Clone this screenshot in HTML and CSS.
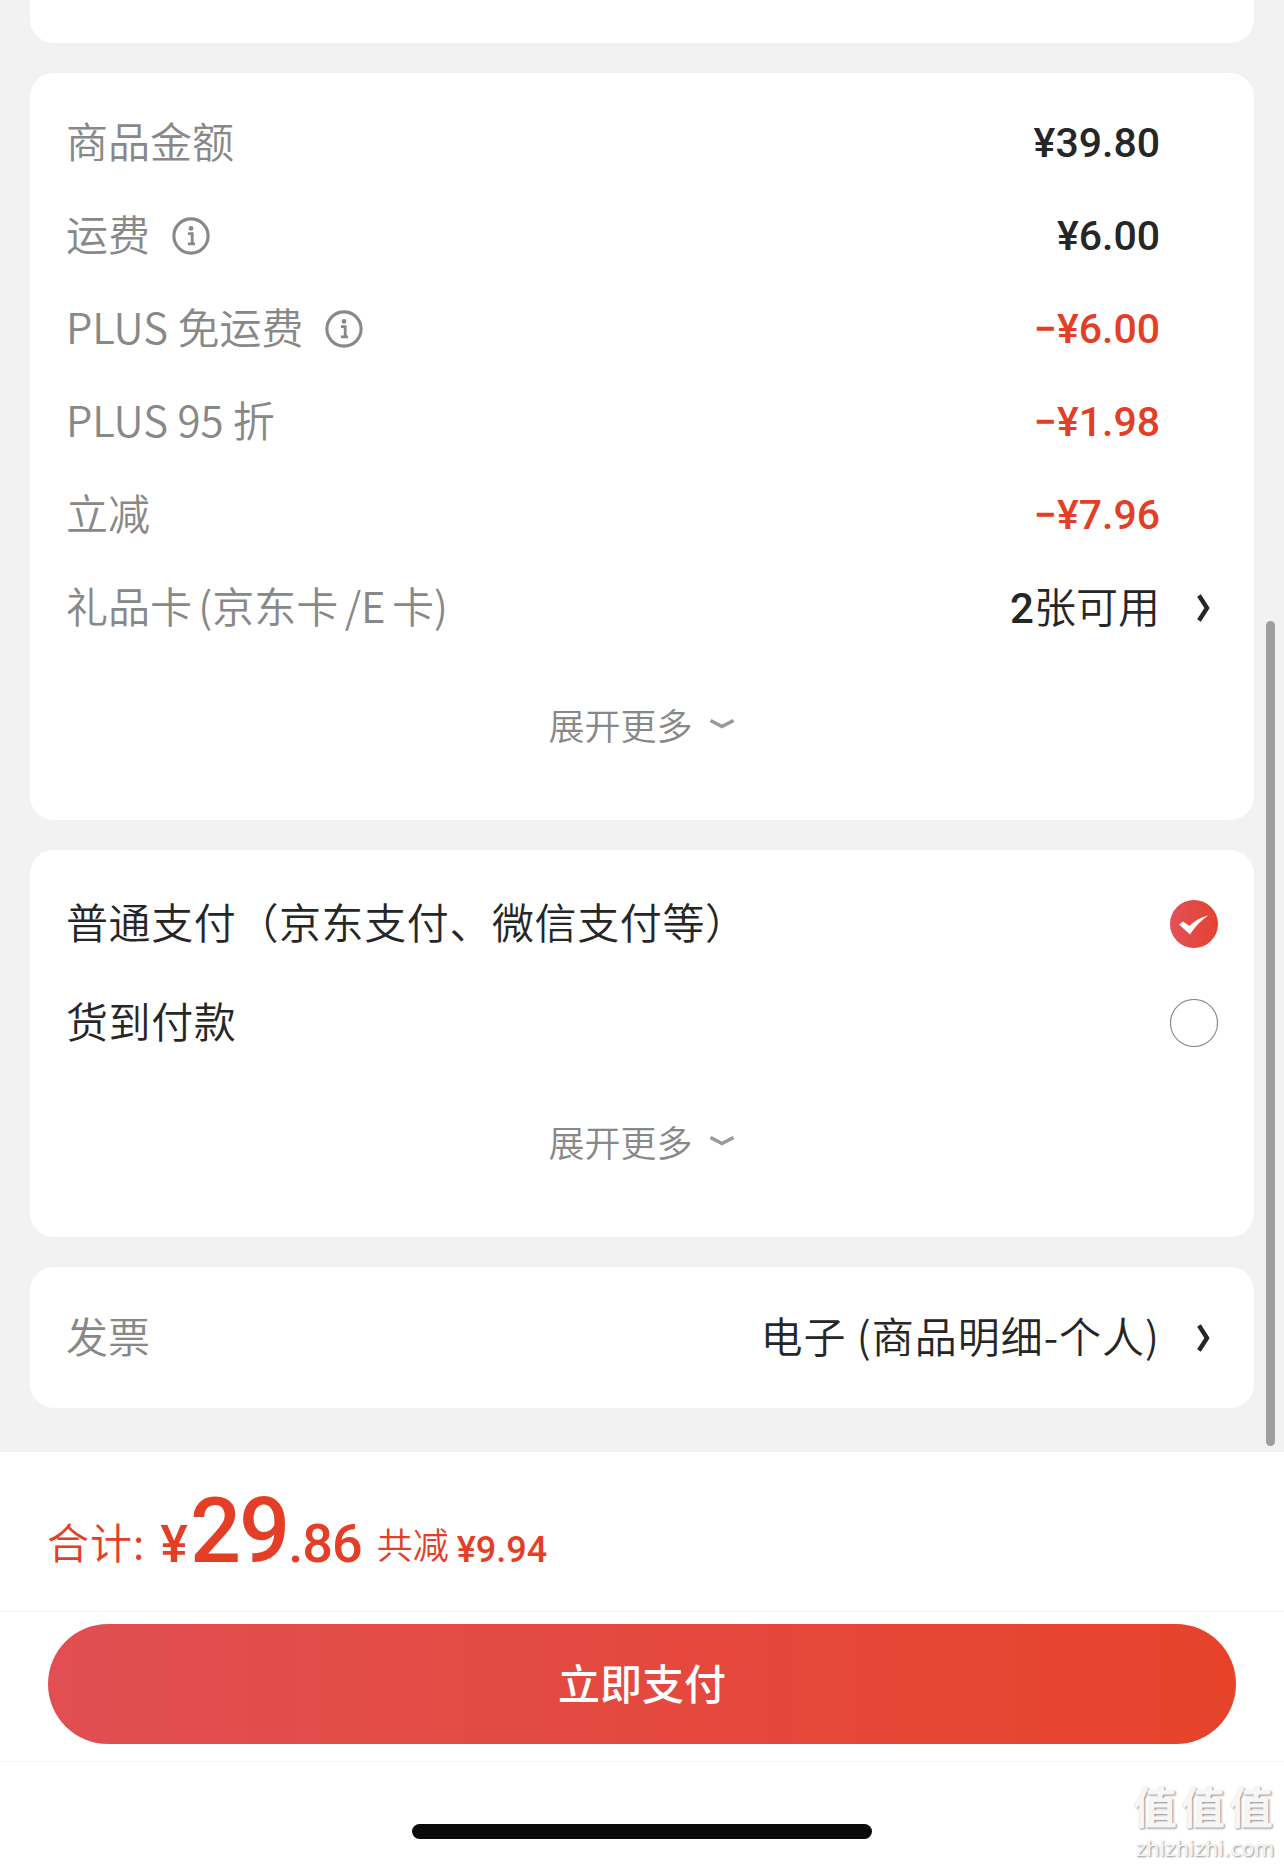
FILE: index.html
```html
<!DOCTYPE html>
<html lang="zh">
<head>
    <meta charset="utf-8">
    <title>订单结算</title>
    <link rel="stylesheet" href="styles.css">
</head>
<body>
    <div class="page">
        <div class="content">
            <div class="card card-top"></div>

            <div class="card card-price">
                <div class="row">
                    <span class="label">商品金额</span>
                    <span class="value">¥39.80</span>
                </div>
                <div class="row">
                    <span class="label">运费
                        <svg class="info" viewBox="0 0 32 32"><circle cx="16" cy="16" r="14.4" fill="none" stroke="#888" stroke-width="2.6"/><circle cx="16" cy="9.6" r="2" fill="#888"/><path d="M13.4 14h3.6v8.4M13.4 22.6h6" fill="none" stroke="#888" stroke-width="2.4"/></svg>
                    </span>
                    <span class="value">¥6.00</span>
                </div>
                <div class="row">
                    <span class="label">PLUS 免运费
                        <svg class="info" viewBox="0 0 32 32"><circle cx="16" cy="16" r="14.4" fill="none" stroke="#888" stroke-width="2.6"/><circle cx="16" cy="9.6" r="2" fill="#888"/><path d="M13.4 14h3.6v8.4M13.4 22.6h6" fill="none" stroke="#888" stroke-width="2.4"/></svg>
                    </span>
                    <span class="value red">−¥6.00</span>
                </div>
                <div class="row">
                    <span class="label">PLUS 95 折</span>
                    <span class="value red">−¥1.98</span>
                </div>
                <div class="row">
                    <span class="label">立减</span>
                    <span class="value red">−¥7.96</span>
                </div>
                <div class="row">
                    <span class="label label-tight">礼品卡 (京东卡 /E 卡)</span>
                    <span class="link"><span><span class="num">2</span>张可用</span>
                        <svg class="arrow" viewBox="0 0 14 30"><path d="M3 2.500L11 15L3 27.500" fill="none" stroke="#262626" stroke-width="4.400"/></svg>
                    </span>
                </div>
                <div class="more more-price">展开更多
                    <svg class="chevron" viewBox="0 0 26 12"><path d="M1.5 2.500L13 8.500L24.500 2.500" fill="none" stroke="#999" stroke-width="3.600"/></svg>
                </div>
            </div>

            <div class="card card-pay">
                <div class="pay-row">
                    <span class="pay-text">普通支付（京东支付、微信支付等）</span>
                    <svg class="radio" viewBox="0 0 48 48"><defs><linearGradient id="checkFill"><stop offset="0" stop-color="#e4505a"/><stop offset="1" stop-color="#e3432e"/></linearGradient></defs><circle cx="24" cy="24" r="24" fill="url(#checkFill)"/><path d="M9 24.500L13 21.500L19.500 26C24 21.500 30 17.500 38.500 15.500C30 21 25 27 20 34.500Z" fill="#fff"/></svg>
                </div>
                <div class="pay-row">
                    <span class="pay-text">货到付款</span>
                    <svg class="radio" viewBox="0 0 48 48"><circle cx="24" cy="24" r="23.500" fill="#fff" stroke="#8c8c8c" stroke-width="1.200"/></svg>
                </div>
                <div class="more more-pay">展开更多
                    <svg class="chevron" viewBox="0 0 26 12"><path d="M1.5 2.500L13 8.500L24.500 2.500" fill="none" stroke="#999" stroke-width="3.600"/></svg>
                </div>
            </div>

            <div class="card card-invoice">
                <span class="label">发票</span>
                <span class="link link-wide"><span>电子 (商品明细-个人)</span>
                    <svg class="arrow" viewBox="0 0 14 30"><path d="M3 2.500L11 15L3 27.500" fill="none" stroke="#262626" stroke-width="4.400"/></svg>
                </span>
            </div>
        </div>

        <div class="footer">
            <div class="total"><span class="total-label">合计:</span><span class="yen">¥</span><span class="big">29</span><span class="cents">.86</span><span class="saved">共减</span><span class="saved-num">¥9.94</span></div>
            <div class="pay-wrap">
                <div class="pay-btn">立即支付</div>
            </div>
            <div class="home-wrap">
                <div class="home-bar"></div>
            </div>
        </div>

        <div class="scrollbar"></div>
        <div class="watermark">
            <div class="wm-big">值值值</div>
            <div class="wm-small">zhizhizhi.com</div>
        </div>
    </div>
</body>
</html>
```

FILE: styles.css
```css
* {
    box-sizing: border-box;
}

body {
    margin: 0;
    background-color: #f2f2f2;
    font-family: "Noto Sans CJK SC", "Noto Sans", sans-serif;
}

.page {
    position: relative;
    width: 1284px;
    height: 1864px;
    overflow: hidden;
    display: flex;
    flex-direction: column;
}

.content {
    height: 1452px;
    padding: 0 30px;
    display: flex;
    flex-direction: column;
    gap: 30px;
}

.card {
    background-color: #fff;
    border-radius: 24px;
}

.card-top {
    height: 43px;
    border-radius: 0 0 24px 24px;
}

.card-price {
    height: 747px;
    padding: 23px 37px 0 36px;
}

.card-pay {
    height: 387px;
    padding: 24px 37px 0 36px;
}

.card-invoice {
    height: 141px;
    padding: 0 37px 0 36px;
    display: flex;
    justify-content: space-between;
    align-items: center;
}

.row {
    height: 93px;
    display: flex;
    justify-content: space-between;
    align-items: center;
}

.label {
    display: flex;
    align-items: center;
    gap: 22px;
    font-size: 42px;
    font-weight: 350;
    color: #888;
    white-space: nowrap;
}

.label-tight {
    word-spacing: -3px;
}

.value {
    margin-right: 57px;
    font-family: Roboto, sans-serif;
    font-weight: 500;
    font-size: 41px;
    color: #262626;
}

.red {
    color: #e43f26;
}

.link {
    display: flex;
    align-items: center;
    gap: 36px;
    margin-right: 7px;
    font-size: 42px;
    font-weight: 350;
    color: #262626;
    white-space: nowrap;
}

.link-wide {
    letter-spacing: 1px;
}

.num {
    font-family: Roboto, sans-serif;
    font-weight: 500;
}

.info {
    width: 38px;
    height: 38px;
    margin-top: 7px;
}

.arrow {
    width: 14px;
    height: 30px;
}

.more {
    display: flex;
    justify-content: center;
    align-items: center;
    gap: 16px;
    font-size: 36px;
    font-weight: 350;
    color: #888;
}

.more-price {
    margin-top: 48px;
    height: 44px;
}

.more-pay {
    margin-top: 47px;
    height: 44px;
}

.chevron {
    width: 26px;
    height: 12px;
}

.pay-row {
    height: 99px;
    margin-right: -1px;
    display: flex;
    justify-content: space-between;
    align-items: center;
    font-size: 42px;
    font-weight: 350;
    color: #262626;
}

.pay-text {
    letter-spacing: 0.6px;
    padding-bottom: 7px;
}

.radio {
    width: 48px;
    height: 48px;
}

.row .label,
.row .link span,
.card-invoice .label,
.card-invoice .link span {
    padding-bottom: 7px;
}

.row .link span span {
    padding-bottom: 0;
}

.footer {
    flex: 1;
    background-color: #fff;
    display: flex;
    flex-direction: column;
}

.total {
    height: 160px;
    padding: 35px 0 0 47px;
    font-size: 0;
    line-height: 1;
    border-bottom: 1px solid #f5f5f5;
    color: #e43f26;
    white-space: nowrap;
}

.total-label {
    font-size: 42px;
    font-weight: 350;
    letter-spacing: 1px;
    margin-right: 15px;
    vertical-align: 3px;
}

.yen {
    font-family: Roboto, sans-serif;
    font-weight: 500;
    font-size: 52px;
    margin-right: 2px;
}

.big {
    font-family: Roboto, sans-serif;
    font-weight: 500;
    font-size: 90px;
    letter-spacing: -2px;
}

.cents {
    font-family: Roboto, sans-serif;
    font-weight: 500;
    font-size: 54px;
    letter-spacing: -1px;
    margin-right: 15px;
}

.saved {
    font-size: 36px;
    font-weight: 350;
    margin-right: 8px;
    vertical-align: 3px;
}

.saved-num {
    font-family: Roboto, sans-serif;
    font-weight: 500;
    font-size: 36px;
}

.pay-wrap {
    height: 150px;
    padding: 12px 48px 0;
    border-bottom: 1px solid #f5f5f5;
}

.pay-btn {
    height: 120px;
    padding-bottom: 5px;
    border-radius: 60px;
    background: linear-gradient(90deg, #e14f53, #e7432b);
    color: #fff;
    font-size: 42px;
    font-weight: 500;
    display: flex;
    justify-content: center;
    align-items: center;
}

.home-wrap {
    flex: 1;
    display: flex;
    justify-content: center;
    padding-top: 62px;
}

.home-bar {
    width: 460px;
    height: 15px;
    border-radius: 8px;
    background-color: #0a0a0a;
}

.scrollbar {
    position: absolute;
    left: 1266px;
    top: 621px;
    width: 9px;
    height: 825px;
    border-radius: 5px;
    background-color: #9e9e9e;
}

.watermark {
    position: absolute;
    left: 1130px;
    top: 1780px;
    width: 150px;
    text-align: center;
    color: #f6f6f6;
    text-shadow: 1px 1px 2px #8a8a8a;
    white-space: nowrap;
}

.wm-big {
    font-size: 44px;
    font-weight: 700;
    letter-spacing: 4px;
    line-height: 50px;
    margin-bottom: 7px;
}

.wm-small {
    font-family: "DejaVu Sans", sans-serif;
    font-size: 20.5px;
    line-height: 24px;
}
```
